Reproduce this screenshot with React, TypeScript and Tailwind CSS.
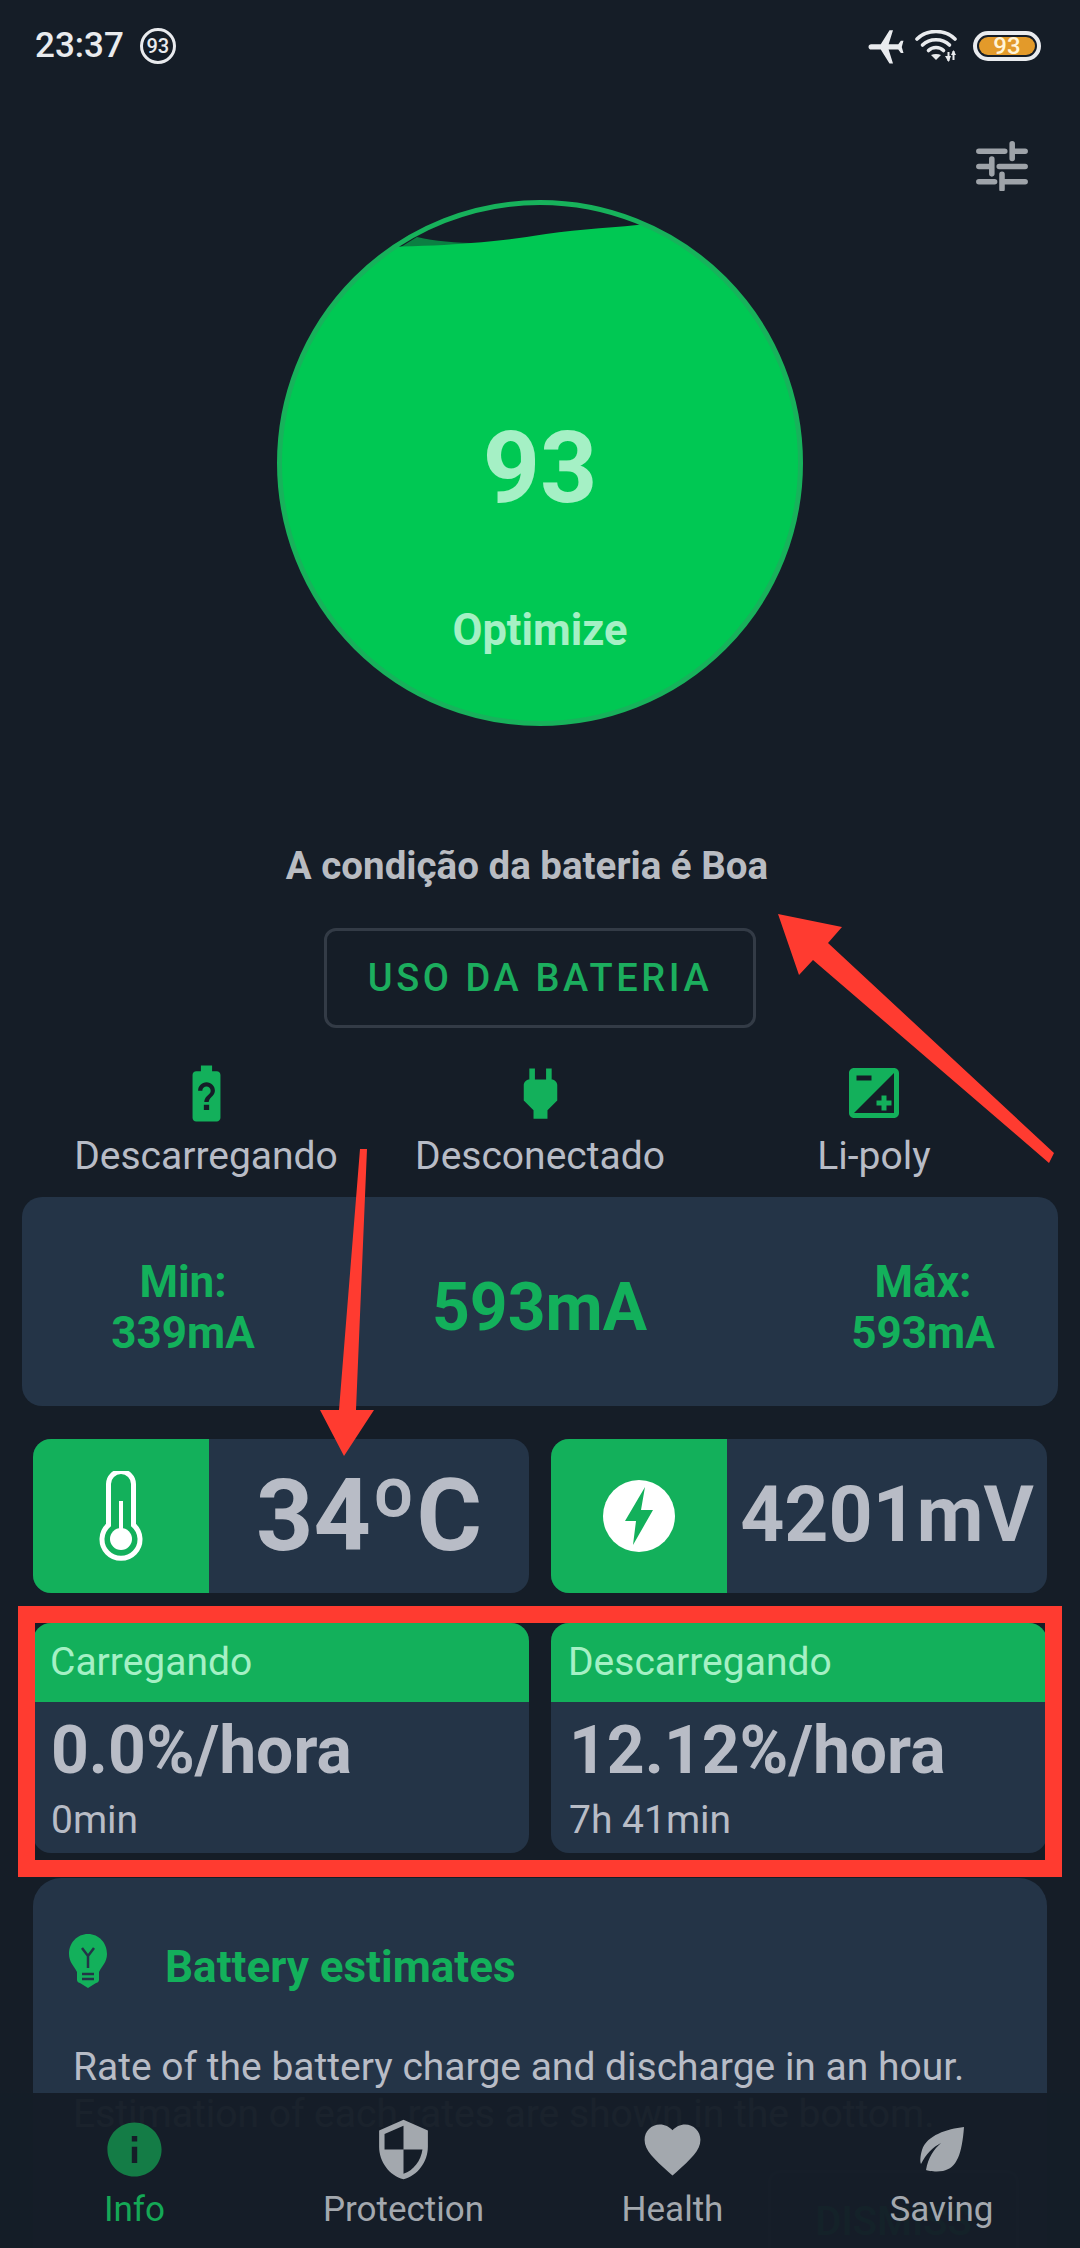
import React from "react";

function Plane() {
  return (
    <svg viewBox="0 0 24 24" className="w-[42px] h-[42px] -rotate-90" fill="#e9ebee">
      <path d="M21 16v-2l-8-5V3.5c0-.83-.67-1.5-1.5-1.5S10 2.67 10 3.5V9l-8 5v2l8-2.5V19l-2 1.5V22l3.5-1 3.5 1v-1.5L13 19v-5.5l8 2.5z" />
    </svg>
  );
}

function Wifi() {
  return (
    <svg viewBox="0 0 42 32" className="w-[42px] h-[32px]" fill="none" stroke="#e9ebee" strokeWidth="3.6" strokeLinecap="round">
      <path d="M2 9 C12 -1 30 -1 40 9" />
      <path d="M7.5 15 C14.5 8 27.5 8 34.5 15" />
      <path d="M13.5 20.5 C17.5 16.5 24.5 16.5 28.5 20.5" />
      <path d="M16 25 C19 23.5 23 23.5 26 25 L21 30 Z" fill="#e9ebee" stroke="none" />
      <path d="M33.5 22 V31 M38.5 21 V30" strokeWidth="2" strokeLinecap="butt" />
      <path d="M30 26 L33.5 32 L36 26 Z M36 25 L38.5 20 L41 25 Z" fill="#e9ebee" stroke="none" />
    </svg>
  );
}

function Tune() {
  return (
    <svg viewBox="0 0 56 54" className="w-[52px] h-[50px]" fill="none" stroke="#9ea3a9" strokeWidth="6" strokeLinecap="round">
      <path d="M3 11 H31 M39 3 V19 M39 11 H53" />
      <path d="M3 27.5 H17 M17 19.5 V35.5 M25 27.5 H53" />
      <path d="M3 44 H20 M28 36 V52 M28 44 H53" />
    </svg>
  );
}

function Gauge() {
  return (
    <div className="relative mx-auto w-[526px] h-[526px] flex flex-col items-center">
      <svg viewBox="277 200 526 526" className="absolute inset-0 w-full h-full">
        <defs>
          <clipPath id="inner">
            <circle cx="540" cy="463" r="262" />
          </clipPath>
        </defs>
        <g clipPath="url(#inner)">
          <path d="M396 250 L417 237 C435 241 455 243 480 243 L480 262 L396 262 Z" fill="#0b7f42" />
          <path d="M390 247 C420 246 450 245 471 243 C500 241 520 238 546 234 C580 229 620 227 648 224 L820 224 L820 740 L260 740 L260 247 Z" fill="#00c853" />
        </g>
        <circle cx="540" cy="463" r="260.5" fill="none" stroke="#17b25b" strokeWidth="5" />
      </svg>
      <span className="relative mt-[210px] h-[116px] leading-[116px] text-[100px] font-bold text-[#a5f0c5]">93</span>
      <span className="relative mt-[80px] h-[50px] leading-[50px] text-[43.5px] font-bold text-[#a5f0c5]">Optimize</span>
    </div>
  );
}

function StatusIcon({ d, label, size }: { d: string; label: string; size: string }) {
  return (
    <div className="flex flex-col items-center">
      <div className="h-[68px] flex items-center justify-center">
        <svg viewBox="0 0 24 24" className={size} fill="#13b05b">
          <path d={d} />
        </svg>
      </div>
      <span className="mt-[8px] h-[42px] leading-[42px] text-[39px] text-[#b8bcc6]">{label}</span>
    </div>
  );
}

function RateCard({ title, rate, time }: { title: string; rate: string; time: string }) {
  return (
    <div className="rounded-[18px] overflow-hidden bg-[#243447] h-[230px]">
      <div className="h-[79px] bg-[#13b05b] flex items-center pl-[17px] text-[39px] text-[#a5f0c5]">{title}</div>
      <div className="pl-[18px] mt-[14px] h-[70px] leading-[70px] text-[66px] font-bold text-[#b8bcc6]">{rate}</div>
      <div className="pl-[18px] mt-[13px] h-[42px] leading-[42px] text-[39px] text-[#b8bcc6]">{time}</div>
    </div>
  );
}

function NavItem({ label, active, children }: { label: string; active?: boolean; children: React.ReactNode }) {
  return (
    <div className="flex flex-col items-center pt-[23px]">
      <div className="h-[66px] flex items-center justify-center">{children}</div>
      <span className={"mt-[9px] h-[38px] leading-[38px] text-[35px] " + (active ? "text-[#14a856]" : "text-[#a3a8ae]")}>{label}</span>
    </div>
  );
}

export default function App() {
  return (
    <div className="relative w-[1080px] h-[2248px] overflow-hidden bg-[#151d27] font-[Roboto,sans-serif]">
      {/* status bar */}
      <div className="h-[92px] flex items-center justify-between pl-[35px] pr-[39px]">
        <div className="flex items-center gap-[16px]">
          <span className="text-[35px] font-medium text-[#e9ebee]">23:37</span>
          <div className="w-[36px] h-[36px] rounded-full border-[3px] border-[#e9ebee] flex items-center justify-center text-[20px] font-medium text-[#e9ebee]">93</div>
        </div>
        <div className="flex items-center gap-[13px]">
          <div className="-mr-[5px]"><Plane /></div>
          <Wifi />
          <div className="w-[68px] h-[30px] rounded-full border-[4px] border-[#e9ebee] p-[2px] ml-[3px]">
            <div className="w-full h-full rounded-full bg-[#e39a2a] flex items-center justify-center text-[24px] leading-none font-medium text-[#fff4d8]">93</div>
          </div>
        </div>
      </div>

      {/* tune */}
      <div className="h-[108px] flex justify-end pr-[52px] pt-[49px]">
        <Tune />
      </div>

      <Gauge />

      <div className="mt-[119px] h-[42px] leading-[42px] pr-[26px] text-center text-[38.5px] font-bold text-[#b9bcc2]">A condição da bateria é Boa</div>

      <div className="mt-[41px] mx-auto w-[432px] h-[100px] rounded-[12px] border-[3px] border-[#333b46] flex items-center justify-center text-[38px] font-medium tracking-[3.6px] text-[#1cae5e]">USO DA BATERIA</div>

      <div className="mt-[31px] px-[39px] grid grid-cols-3">
        <StatusIcon
          size="w-[67px] h-[67px]"
          label="Descarregando"
          d="M15.67 4H14V2h-4v2H8.33C7.6 4 7 4.6 7 5.33v15.33C7 21.4 7.6 22 8.33 22h7.33c.74 0 1.34-.6 1.34-1.33V5.33C17 4.6 16.4 4 15.67 4zm-2.72 13.95h-1.9v-1.9h1.9v1.9zm1.35-5.26s-.38.42-.67.71c-.48.48-.83 1.15-.83 1.6h-1.6c0-.83.46-1.52.93-2l.93-.94c.27-.27.44-.65.44-1.06 0-.83-.67-1.5-1.5-1.5s-1.5.67-1.5 1.5H9c0-1.66 1.34-3 3-3s3 1.34 3 3c0 .66-.27 1.26-.7 1.69z"
        />
        <StatusIcon
          size="w-[67px] h-[67px]"
          label="Desconectado"
          d="M16.01 7L16 3h-2v4h-4V3H8v4h-.01C7 6.99 6 7.99 6 8.99v5.49L9.5 18v3h5v-3l3.5-3.51v-5.5c0-1-1-2-1.99-1.99z"
        />
        <StatusIcon
          size="w-[60px] h-[60px]"
          label="Li-poly"
          d="M15 17v2h2v-2h2v-2h-2v-2h-2v2h-2v2h2zm5-15H4c-1.1 0-2 .9-2 2v16c0 1.1.9 2 2 2h16c1.1 0 2-.9 2-2V4c0-1.1-.9-2-2-2zM5 5h6v2H5V5zm15 15H4L20 4v16z"
        />
      </div>

      {/* current panel */}
      <div className="mt-[20px] mx-[22px] h-[209px] pt-[12px] rounded-[20px] bg-[#243447] grid grid-cols-[322px_391px_322px] items-center text-[#13b05b]">
        <div className="flex flex-col items-center font-bold text-[44px] leading-[51px]">
          <span>Min:</span>
          <span>339mA</span>
        </div>
        <div className="text-center font-bold text-[66px]">593mA</div>
        <div className="pl-[54px] flex flex-col items-center font-bold text-[44px] leading-[51px]">
          <span>Máx:</span>
          <span>593mA</span>
        </div>
      </div>

      {/* temp / voltage */}
      <div className="mt-[33px] px-[33px] grid grid-cols-2 gap-[22px]">
        <div className="h-[154px] rounded-[18px] overflow-hidden bg-[#243447] flex">
          <div className="w-[176px] bg-[#13b05b] flex items-center justify-center">
            <svg viewBox="0 0 44 90" className="w-[44px] h-[90px]" fill="none" stroke="#fff" strokeWidth="5">
              <path d="M9.5 54 V13 a12.5 12.5 0 0 1 25 0 V54 a19 19 0 1 1 -25 0 Z" />
              <path d="M22 30 V68" strokeWidth="4" />
              <circle cx="22" cy="68" r="11" fill="#fff" stroke="none" />
            </svg>
          </div>
          <div className="flex-1 flex items-center justify-center text-[100px] font-bold text-[#b8bcc6]">34ºC</div>
        </div>
        <div className="h-[154px] rounded-[18px] overflow-hidden bg-[#243447] flex">
          <div className="w-[176px] bg-[#13b05b] flex items-center justify-center">
            <svg viewBox="0 0 72 74" className="w-[72px] h-[74px]">
              <circle cx="36" cy="37" r="36" fill="#fff" />
              <path d="M42 8 L22 42 H33 L30 66 L50 31 H38 Z" fill="#13b05b" />
            </svg>
          </div>
          <div className="flex-1 flex items-center justify-center text-[77px] font-bold text-[#b8bcc6]">4201mV</div>
        </div>
      </div>

      {/* rates */}
      <div className="mt-[30px] px-[33px] grid grid-cols-2 gap-[22px]">
        <RateCard title="Carregando" rate="0.0%/hora" time="0min" />
        <RateCard title="Descarregando" rate="12.12%/hora" time="7h 41min" />
      </div>

      {/* estimates */}
      <div className="mt-[25px] mx-[33px] h-[400px] rounded-[28px] bg-[#243447] px-[40px]">
        <div className="flex items-start pt-[56px]">
          <svg viewBox="0 0 38 54" className="w-[38px] h-[54px] shrink-0 -ml-[4px]">
            <path d="M19 0 C8 0 0 9 0 20 C0 28 5 32 8 38 V46 C8 48 10 49 11 49 L19 54 L27 49 C28 49 30 48 30 46 V38 C33 32 38 28 38 20 C38 9 30 0 19 0 Z" fill="#13b05b" />
            <path d="M13 14 L19 22 L25 14 M19 22 V34 M13 40 H25 M13 45 H25" fill="none" stroke="#243447" strokeWidth="2.5" />
          </svg>
          <span className="ml-[58px] mt-[10px] h-[46px] leading-[46px] text-[44px] font-bold text-[#13b05b]">Battery estimates</span>
        </div>
        <div className="mt-[54px] text-[39px] leading-[47px] whitespace-nowrap text-[#b8bcc6]">
          Rate of the battery charge and discharge in an hour.
          <br />
          Estimation of each rates are shown in the bottom.
        </div>
        <div className="mt-[32px] ml-[695px] w-[251px] h-[104px] rounded-[12px] border-[3px] border-[#3a4a5c] flex items-center justify-center text-[40px] font-medium text-[#13b05b]">DISMISS</div>
      </div>

      {/* bottom nav */}
      <div className="absolute left-0 right-0 bottom-0 h-[155px] pr-[4px] bg-[#151d27]/97 grid grid-cols-4">
        <NavItem label="Info" active>
          <svg viewBox="0 0 24 24" className="w-[65px] h-[65px]" fill="#147c46">
            <path d="M12 2C6.48 2 2 6.48 2 12s4.48 10 10 10 10-4.48 10-10S17.52 2 12 2zm1 15h-2v-6h2v6zm0-8h-2V7h2v2z" />
          </svg>
        </NavItem>
        <NavItem label="Protection">
          <svg viewBox="0 0 24 24" className="w-[65px] h-[65px]" fill="#a3a8ae">
            <path d="M12 1L3 5v6c0 5.55 3.84 10.74 9 12 5.16-1.26 9-6.45 9-12V5l-9-4zm0 10.99h7c-.53 4.12-3.28 7.79-7 8.94V12H5V6.3l7-3.11v8.8z" />
          </svg>
        </NavItem>
        <NavItem label="Health">
          <svg viewBox="0 0 24 24" className="w-[67px] h-[67px]" fill="#a3a8ae">
            <path d="M12 21.35l-1.45-1.32C5.4 15.36 2 12.28 2 8.5 2 5.42 4.42 3 7.5 3c1.74 0 3.41.81 4.5 2.09C13.09 3.81 14.76 3 16.5 3 19.58 3 22 5.42 22 8.5c0 3.78-3.4 6.86-8.55 11.54L12 21.35z" />
          </svg>
        </NavItem>
        <NavItem label="Saving">
          <svg viewBox="0 0 46 46" className="w-[46px] h-[46px]" fill="#a3a8ae">
            <path d="M45 1 C28 3 8 9 3 24 C1 31 1 36 2 38 C7 28 14 21 22 17 C15 23 9 32 7 44 C9 45 17 46 24 45 C38 42 43 28 45 1 Z" />
          </svg>
        </NavItem>
      </div>

      {/* annotations over the screenshot */}
      <div className="absolute left-[18px] top-[1606px] w-[1044px] h-[271px] border-[17px] border-[#ff3b30]" />
      <svg viewBox="0 0 1080 2248" className="absolute inset-0 w-[1080px] h-[2248px] pointer-events-none" fill="#ff3b30">
        <polygon points="778,914 842,927 828,943 1054,1153 1049,1163 813,960 799,975" />
        <polygon points="360,1149 367,1149 356,1410 374,1410 344,1456 320,1410 339,1410" />
      </svg>
    </div>
  );
}
